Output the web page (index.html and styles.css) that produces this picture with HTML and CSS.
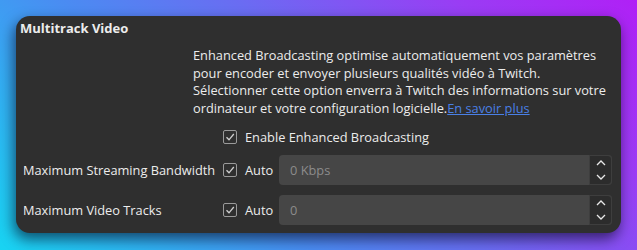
FILE: index.html
```html
<!DOCTYPE html>
<html lang="fr">
<head>
    <meta charset="UTF-8">
    <title>Multitrack Video</title>
    <link rel="stylesheet" href="styles.css">
</head>
<body>
    <div class="card">
        <div class="title">Multitrack Video</div>

        <p class="desc">Enhanced Broadcasting optimise automatiquement vos paramètres<br>pour encoder et envoyer plusieurs qualités vidéo à Twitch.<br>Sélectionner cette option enverra à Twitch des informations sur votre<br>ordinateur et votre configuration logicielle.<a href="#">En savoir plus</a></p>

        <label class="check enable">
            <span class="box"><svg viewBox="0 0 14 14" width="14" height="14"><path d="M3.5 7.2 L6 9.8 L10.8 4" fill="none" stroke="#cfcfcf" stroke-width="1.3"/></svg></span>
            Enable Enhanced Broadcasting
        </label>

        <div class="row">
            <span class="label">Maximum Streaming Bandwidth</span>
            <label class="check">
                <span class="box"><svg viewBox="0 0 14 14" width="14" height="14"><path d="M3.5 7.2 L6 9.8 L10.8 4" fill="none" stroke="#cfcfcf" stroke-width="1.3"/></svg></span>
                Auto
            </label>
            <div class="spin">
                <span class="value">0 Kbps</span>
                <span class="arrows">
                    <svg viewBox="0 0 10 6" width="10" height="6"><path d="M1 5 L5 1 L9 5" fill="none" stroke="#e8e8e8" stroke-width="1.3"/></svg>
                    <svg viewBox="0 0 10 6" width="10" height="6"><path d="M1 1 L5 5 L9 1" fill="none" stroke="#e8e8e8" stroke-width="1.3"/></svg>
                </span>
            </div>
        </div>

        <div class="row">
            <span class="label">Maximum Video Tracks</span>
            <label class="check">
                <span class="box"><svg viewBox="0 0 14 14" width="14" height="14"><path d="M3.5 7.2 L6 9.8 L10.8 4" fill="none" stroke="#cfcfcf" stroke-width="1.3"/></svg></span>
                Auto
            </label>
            <div class="spin">
                <span class="value">0</span>
                <span class="arrows">
                    <svg viewBox="0 0 10 6" width="10" height="6"><path d="M1 5 L5 1 L9 5" fill="none" stroke="#e8e8e8" stroke-width="1.3"/></svg>
                    <svg viewBox="0 0 10 6" width="10" height="6"><path d="M1 1 L5 5 L9 1" fill="none" stroke="#e8e8e8" stroke-width="1.3"/></svg>
                </span>
            </div>
        </div>
    </div>
</body>
</html>
```

FILE: styles.css
```css
body {
    margin: 0;
    width: 637px;
    height: 250px;
    overflow: hidden;
    font-family: "Open Sans", sans-serif;
    font-size: 12.8px;
    color: #ececec;
    background: linear-gradient(45deg, #18d4f2 0%, #4a8cf2 35%, #6a6cf2 55%, #9a3cf4 80%, #b020f6 100%);
}
.card {
    margin: 16px 0 0 16px;
    width: 605px;
    height: 217px;
    box-sizing: border-box;
    padding: 2px 9px 0 7px;
    background-color: #2f2f2f;
    border-radius: 14px;
    box-shadow: -2px 6px 14px rgba(0, 0, 20, 0.6);
}
.title {
    font-size: 13px;
    font-weight: bold;
    margin-left: -3px;
    line-height: 20px;
}
.desc {
    margin: 9px 0 0 170px;
    line-height: 17.7px;
    white-space: nowrap;
}
.desc a {
    color: #4a80e6;
}
.check {
    display: flex;
    align-items: center;
    gap: 8px;
}
.box {
    width: 14px;
    height: 14px;
    box-sizing: border-box;
    border: 1px solid #9a9a9a;
    border-radius: 2px;
    display: flex;
}
.box svg {
    margin: -1px;
}
.enable {
    margin: 9px 0 0 200px;
    height: 20px;
}
.row {
    display: flex;
    align-items: center;
    height: 30px;
    margin-top: 10px;
}
.enable + .row {
    margin-top: 8px;
}
.label {
    width: 200px;
}
.row .check {
    width: 56px;
}
.spin {
    flex: 1;
    height: 30px;
    display: flex;
    background-color: #464646;
    border-radius: 4px;
}
.value {
    flex: 1;
    padding-left: 11px;
    line-height: 30px;
    color: #8c8c8c;
}
.arrows {
    width: 23px;
    box-sizing: border-box;
    border: 1px solid #3e3e3e;
    border-radius: 0 4px 4px 0;
    background-color: #2c2c2c;
    display: flex;
    flex-direction: column;
    align-items: center;
    justify-content: center;
    gap: 8px;
}
```
